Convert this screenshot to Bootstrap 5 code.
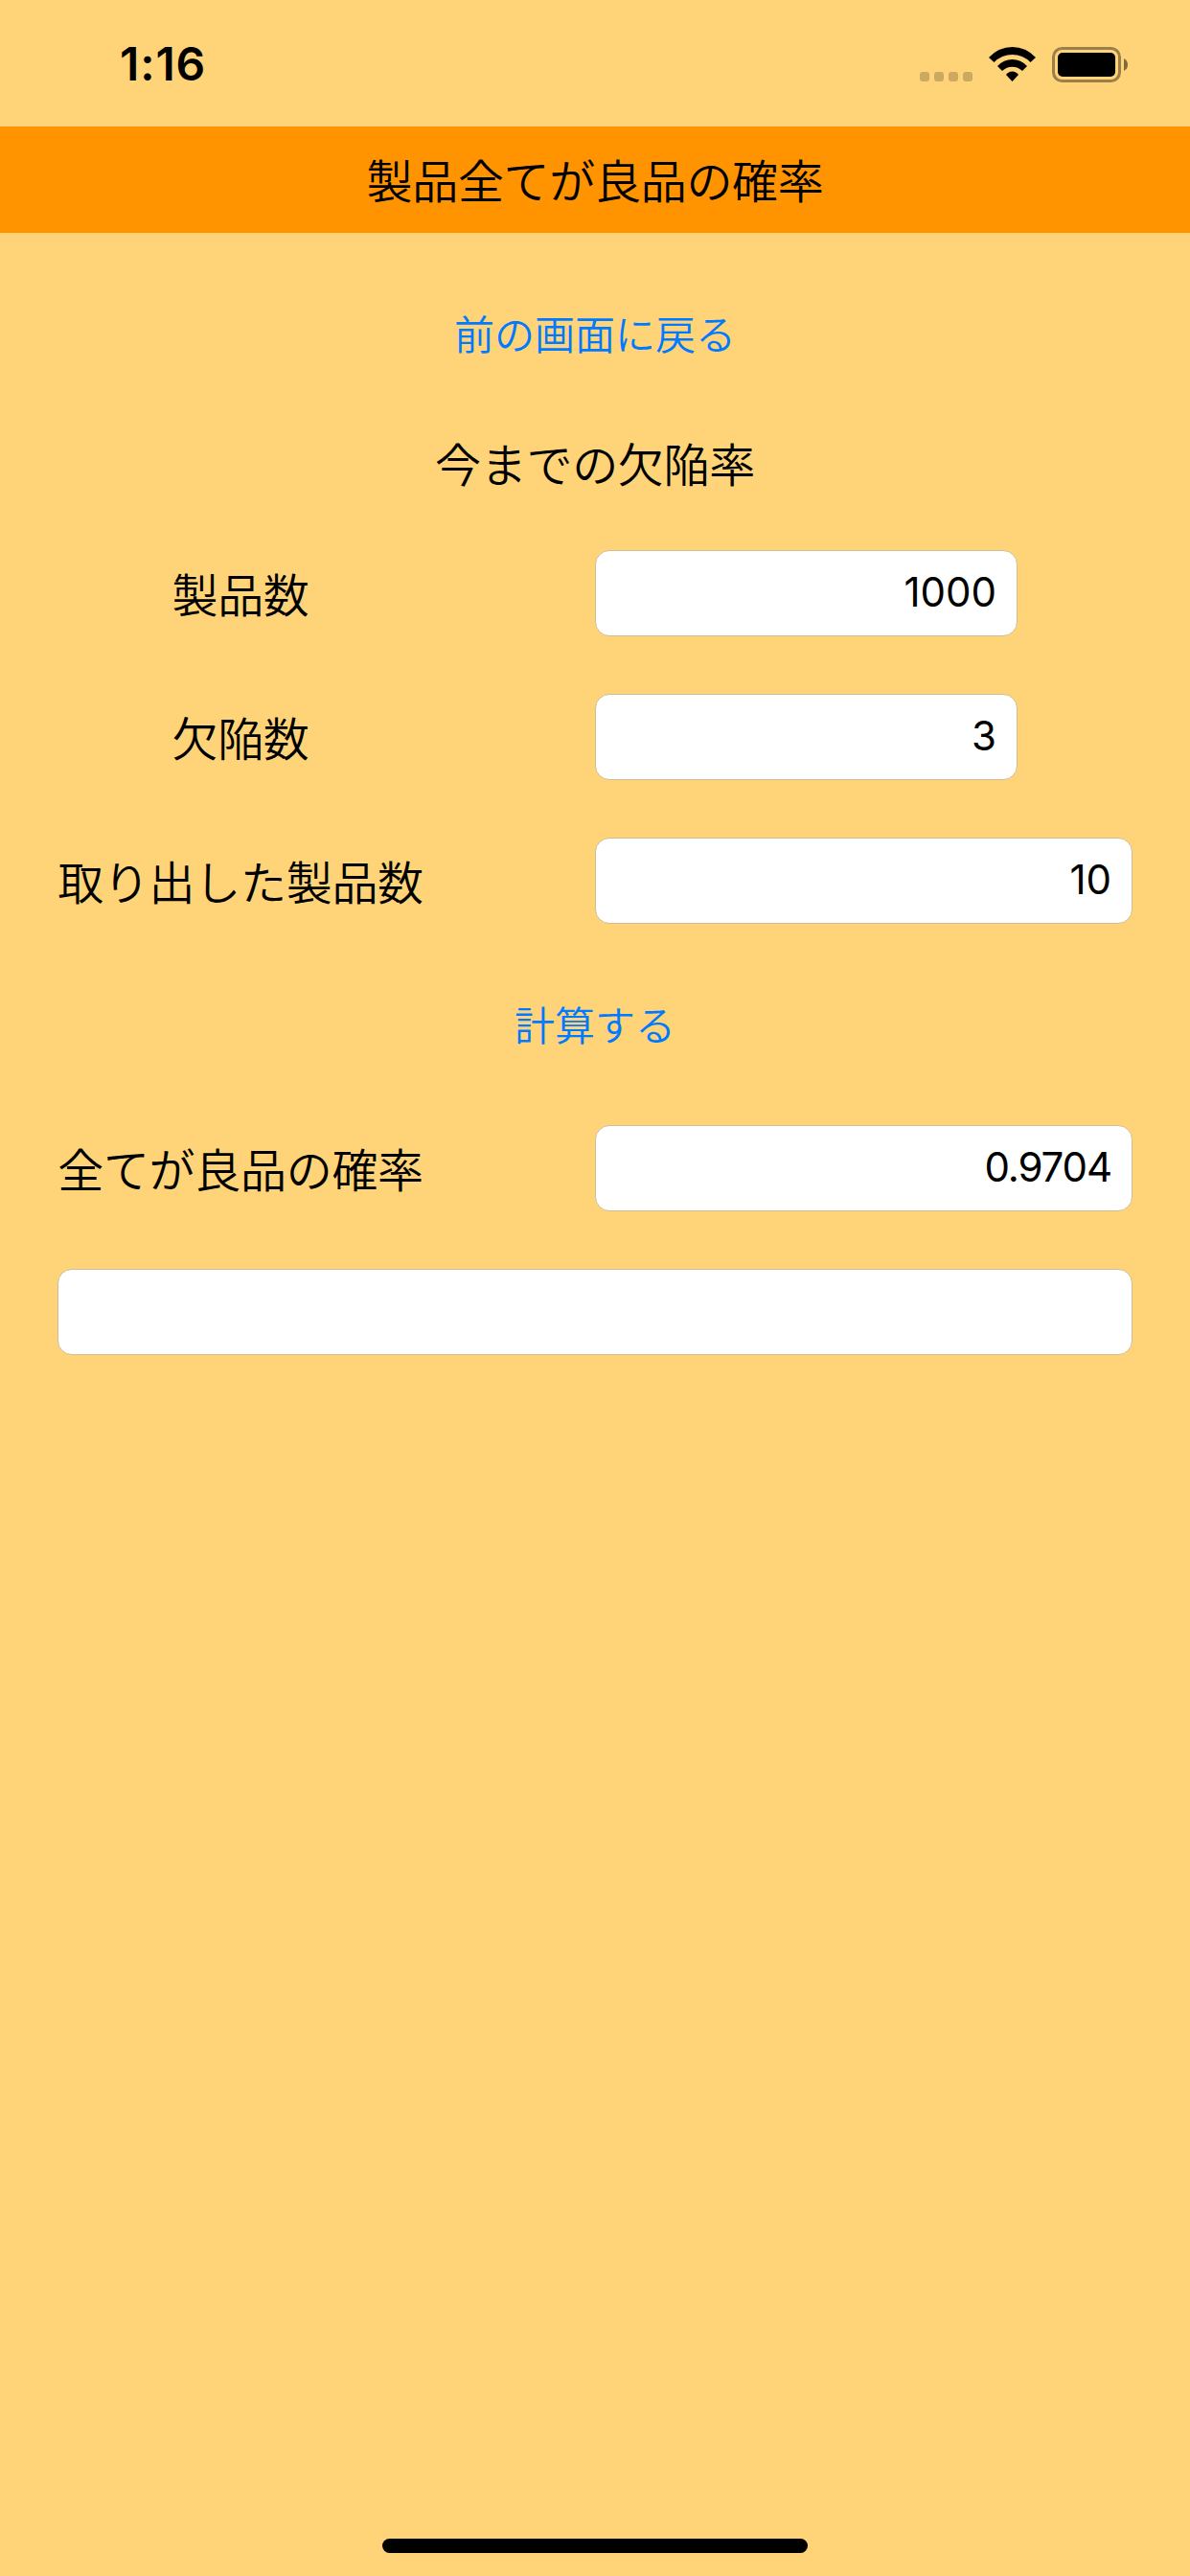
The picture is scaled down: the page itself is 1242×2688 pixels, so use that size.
<!DOCTYPE html>
<html lang="ja">
<head>
<meta charset="utf-8">
<meta name="viewport" content="width=device-width, initial-scale=1">
<title>製品全てが良品の確率</title>
<link href="https://cdn.jsdelivr.net/npm/bootstrap@5.3.0/dist/css/bootstrap.min.css" rel="stylesheet">
<style>
  body { background: #ffd479; color: #000; font-family: Inter, "Noto Sans CJK JP", sans-serif; }
  .screen { width: 1242px; height: 2688px; overflow: hidden; }
  .status-bar { height: 132px; padding: 2px 65px 0 125px; }
  .clock { font-size: 48px; font-weight: 600; line-height: 1; letter-spacing: .9px; }
  .title-bar { height: 111px; padding-bottom: 3px; background: #ff9300; }
  .jp-text { font-family: "Noto Sans CJK JP", sans-serif; font-weight: 350; font-size: 48px; line-height: 61px; letter-spacing: -.3px; margin: 0; white-space: nowrap; }
  .form-stack { padding: 60px 60px 0; gap: 60px; }
  .section-title { height: 61px; line-height: 58px; }
  .field-row { height: 90px; }
  .field-label { width: 382px; margin-right: 179px; padding-bottom: 2px; }
  .form-control.value-box { height: 90px; border: 1px solid #d0bd92; border-radius: 15px; padding: 0 21px 4px; font-size: 42px; line-height: 84px; color: #000; background: #fff; }
  .form-control.decimal-box { letter-spacing: -1.1px; }
  .short-box { width: 441px; flex: none; }
  .btn.text-btn { font-family: "Noto Sans CJK JP", sans-serif; font-weight: 350; font-size: 42px; line-height: 87px; height: 90px; color: #007aff; padding: 0 0 3px; border: 0; }
  .home-bar { width: 444px; height: 15px; background: #000; margin-bottom: 24px; }
</style>
<script src="https://cdn.jsdelivr.net/npm/bootstrap@5.3.0/dist/js/bootstrap.bundle.min.js"></script>
</head>
<body>
<div class="screen d-flex flex-column">
  <div class="status-bar d-flex align-items-center justify-content-between">
    <span class="clock">1:16</span>
    <svg width="220" height="40" viewBox="0 0 220 40" aria-hidden="true">
      <g fill="#000" fill-opacity=".2">
        <rect x="3" y="28" width="10" height="10" rx="3"/><rect x="18" y="28" width="10" height="10" rx="3"/>
        <rect x="33" y="28" width="10" height="10" rx="3"/><rect x="48" y="28" width="10" height="10" rx="3"/>
      </g>
      <path d="M75 13 Q85.500 2 99.500 2 Q113.500 2 124 13 L118.500 18 Q110.500 10 99.500 10 Q88.500 10 80.500 18Z"/>
      <path d="M84 22 Q90.500 15 99.500 15 Q108.500 15 115 22 L110 27 Q105.500 22.700 99.500 22.700 Q93.500 22.700 89 27Z"/>
      <path d="M93 31 Q95.500 27.500 99.500 27.500 Q103.500 27.500 106 31 L99.500 38Z"/>
      <rect x="142.500" y="3.500" width="69" height="34" rx="9" fill="none" stroke="#000" stroke-opacity=".4" stroke-width="3"/>
      <rect x="147" y="8" width="60" height="25" rx="5"/>
      <path d="M216 14 Q220 16 220 20.500 Q220 25 216 27Z" fill-opacity=".5"/>
    </svg>
  </div>
  <header class="title-bar d-flex align-items-center justify-content-center">
    <h1 class="jp-text">製品全てが良品の確率</h1>
  </header>
  <main class="form-stack d-flex flex-column flex-grow-1">
    <button type="button" class="btn text-btn align-self-center">前の画面に戻る</button>
    <h2 class="jp-text section-title text-center">今までの欠陥率</h2>
    <div class="field-row d-flex align-items-center">
      <label for="total" class="jp-text field-label text-center flex-shrink-0">製品数</label>
      <input id="total" class="form-control value-box short-box text-end" value="1000">
    </div>
    <div class="field-row d-flex align-items-center">
      <label for="defects" class="jp-text field-label text-center flex-shrink-0">欠陥数</label>
      <input id="defects" class="form-control value-box short-box text-end" value="3">
    </div>
    <div class="field-row d-flex align-items-center">
      <label for="picked" class="jp-text field-label text-center flex-shrink-0">取り出した製品数</label>
      <input id="picked" class="form-control value-box text-end" value="10">
    </div>
    <button type="button" class="btn text-btn align-self-center">計算する</button>
    <div class="field-row d-flex align-items-center">
      <label for="result" class="jp-text field-label text-center flex-shrink-0">全てが良品の確率</label>
      <input id="result" class="form-control value-box decimal-box text-end" value="0.9704">
    </div>
    <input class="form-control value-box" aria-label="メッセージ">
  </main>
  <div class="home-bar rounded-pill align-self-center flex-shrink-0"></div>
</div>
</body>
</html>
